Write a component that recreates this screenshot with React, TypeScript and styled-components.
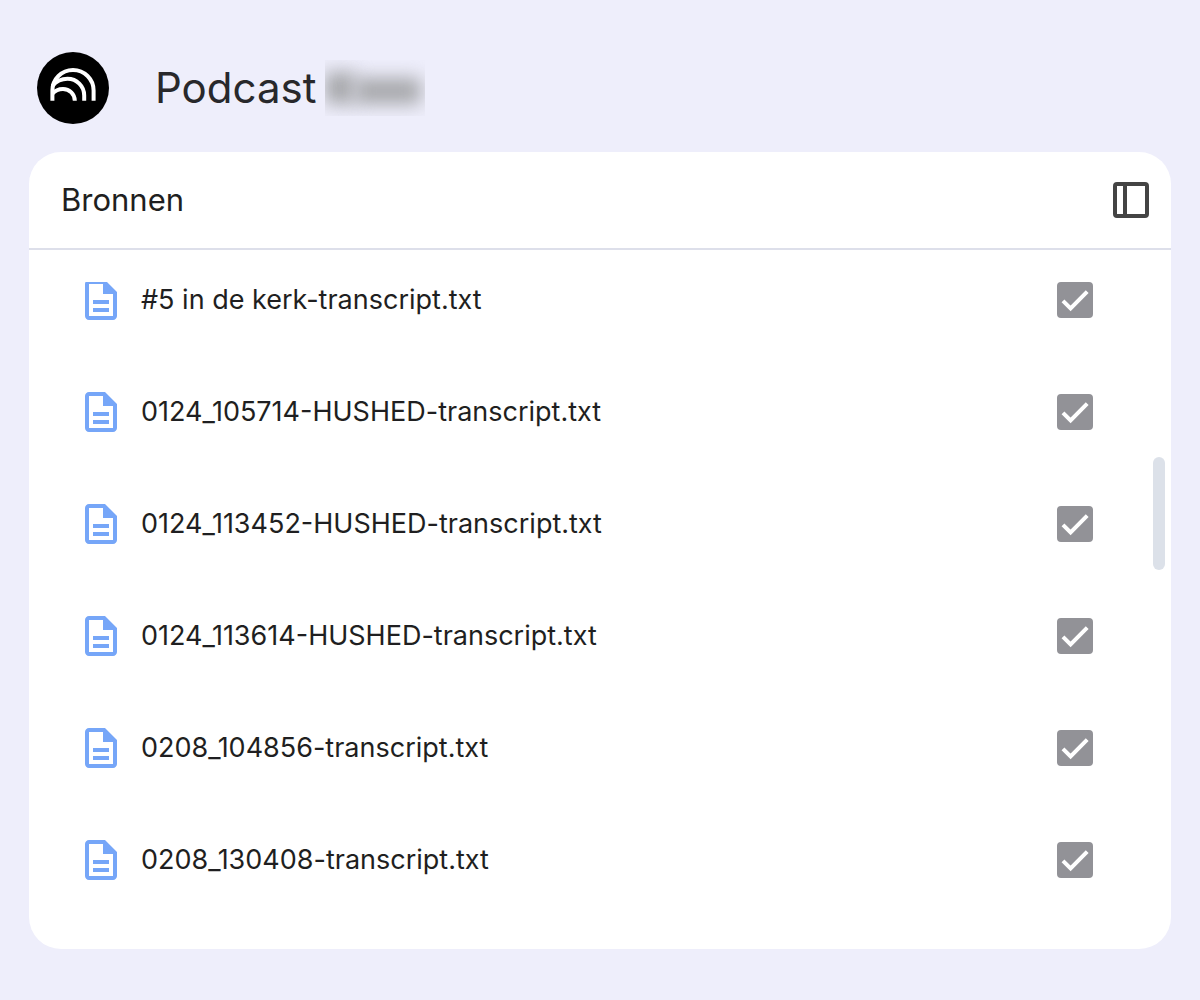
import React, { useState } from "react";
import styled, { createGlobalStyle } from "styled-components";

const GlobalStyle = createGlobalStyle`
  *,
  *::before,
  *::after {
    box-sizing: border-box;
  }

  body {
    margin: 0;
    background: #eeeefb;
    color: #1f1f21;
    font-family: Inter, "Liberation Sans", sans-serif;
  }
`;

const Page = styled.div`
  display: flex;
  flex-direction: column;
  gap: 28px;
  padding: 52px 29px 51px;
`;

const TopBar = styled.header`
  display: flex;
  align-items: center;
  gap: 46px;
  height: 72px;
  padding: 0 8px;
`;

const HomeLink = styled.a`
  display: block;
  flex: none;
  width: 72px;
  height: 72px;

  svg {
    display: block;
  }
`;

const TitleRow = styled.div`
  display: flex;
  align-items: center;
  gap: 9px;
`;

const Title = styled.h1`
  margin: 0;
  color: #28282b;
  font-size: 42px;
  font-weight: 400;
  line-height: 56px;
`;

const HiddenName = styled.span`
  display: flex;
  align-items: flex-end;
  width: 100px;
  height: 56px;
  padding-bottom: 12px;
  overflow: hidden;
`;

const NameSmudge = styled.span<{ $width: number; $height: number }>`
  flex: none;
  width: ${(p) => p.$width}px;
  height: ${(p) => p.$height}px;
  background: #a6a7aa;
  filter: blur(9px);
`;

const Panel = styled.section`
  background: #fff;
  border-radius: 32px;
  overflow: hidden;
`;

const PanelHeader = styled.div`
  display: flex;
  align-items: center;
  justify-content: space-between;
  height: 98px;
  padding: 0 22px 0 32px;
  border-bottom: 2px solid #dddfea;
`;

const PanelTitle = styled.h2`
  margin: 0;
  font-size: 31px;
  font-weight: 400;
  line-height: 40px;
`;

const IconButton = styled.button`
  display: block;
  width: 36px;
  height: 36px;
  padding: 0;
  border: 0;
  background: none;
  cursor: pointer;

  svg {
    display: block;
  }
`;

const PanelBody = styled.div`
  display: flex;
  justify-content: space-between;
  padding: 32px 6px 69px 56px;
`;

const SourceList = styled.ul`
  display: flex;
  flex: 1;
  flex-direction: column;
  justify-content: flex-end;
  gap: 72px;
  height: 598px;
  margin: 0;
  padding: 0;
  overflow: hidden;
  list-style: none;
`;

const SourceRow = styled.li`
  display: flex;
  flex: none;
  align-items: center;
  gap: 24px;
  height: 40px;

  > svg {
    flex: none;
  }
`;

const SourceName = styled.label`
  flex: 1;
  font-size: 27px;
  line-height: 40px;
`;

const CheckBox = styled.span`
  display: grid;
  width: 36px;
  height: 36px;

  > * {
    grid-area: 1 / 1;
  }

  svg {
    pointer-events: none;
  }

  input:not(:checked) + svg {
    visibility: hidden;
  }
`;

const CheckInput = styled.input`
  width: 36px;
  height: 36px;
  margin: 0;
  appearance: none;
  border: 4px solid #929297;
  border-radius: 4px;
  cursor: pointer;

  &:checked {
    background: #929297;
  }
`;

const ScrollTrack = styled.div`
  width: 12px;
  margin-left: 60px;
  padding-top: 175px;
`;

const ScrollThumb = styled.div`
  height: 113px;
  border-radius: 6px;
  background: #dce1e9;
`;

function LogoIcon() {
  return (
    <svg width="72" height="72" viewBox="0 0 72 72" aria-hidden="true">
      <circle cx="36" cy="36" r="36" fill="#000" />
      <g fill="none" stroke="#fff" strokeWidth="4">
        <path d="M15.4 48.8V38.6A20.6 20.6 0 0 1 56.6 38.6V48.8" />
        <path d="M15.4 33.9C19.4 29.2 24.8 26.8 30.5 26.8A16.7 16.7 0 0 1 47.2 43.5V48.8" />
        <path d="M15.4 41.8C18 38.7 22 37 26 37A11.8 11.8 0 0 1 37.8 48.8" />
      </g>
    </svg>
  );
}

function PanelIcon() {
  return (
    <svg width="36" height="36" viewBox="0 0 36 36" aria-hidden="true">
      <rect x="2" y="2" width="32" height="32" rx="2" fill="none" stroke="#444444" strokeWidth="4" />
      <path d="M12 2V34" stroke="#444444" strokeWidth="4" />
    </svg>
  );
}

function DocumentIcon() {
  return (
    <svg width="32" height="40" viewBox="4 2 16 20" fill="#76a6f8" aria-hidden="true">
      <path d="M8 16h8v2H8zm0-4h8v2H8zM14 2H6c-1.1 0-2 .9-2 2v16c0 1.1.9 2 2 2h12c1.1 0 2-.9 2-2V8l-6-6zm4 18H6V4h7v5h5v11z" />
    </svg>
  );
}

function CheckIcon() {
  return (
    <svg width="36" height="36" viewBox="0 0 36 36" aria-hidden="true">
      <path d="M6 18.8L13.6 26.4L30.2 9.6" fill="none" stroke="#fff" strokeWidth="4" />
    </svg>
  );
}

const sources = [
  "#5 in de kerk-transcript.txt",
  "0124_105714-HUSHED-transcript.txt",
  "0124_113452-HUSHED-transcript.txt",
  "0124_113614-HUSHED-transcript.txt",
  "0208_104856-transcript.txt",
  "0208_130408-transcript.txt",
];

function Source({ name, id }: { name: string; id: string }) {
  const [checked, setChecked] = useState(true);
  return (
    <SourceRow>
      <DocumentIcon />
      <SourceName htmlFor={id}>{name}</SourceName>
      <CheckBox>
        <CheckInput
          id={id}
          type="checkbox"
          checked={checked}
          onChange={(e) => setChecked(e.target.checked)}
        />
        <CheckIcon />
      </CheckBox>
    </SourceRow>
  );
}

export default function App() {
  return (
    <>
      <GlobalStyle />
      <Page>
        <TopBar>
          <HomeLink href="#" aria-label="Home">
            <LogoIcon />
          </HomeLink>
          <TitleRow>
            <Title>Podcast</Title>
            <HiddenName aria-hidden="true">
              <NameSmudge $width={30} $height={32} />
              <NameSmudge $width={66} $height={26} />
            </HiddenName>
          </TitleRow>
        </TopBar>
        <Panel>
          <PanelHeader>
            <PanelTitle>Bronnen</PanelTitle>
            <IconButton type="button" aria-label="Bronnen">
              <PanelIcon />
            </IconButton>
          </PanelHeader>
          <PanelBody>
            <SourceList>
              {sources.map((name, i) => (
                <Source key={name} name={name} id={`source-${i}`} />
              ))}
            </SourceList>
            <ScrollTrack>
              <ScrollThumb />
            </ScrollTrack>
          </PanelBody>
        </Panel>
      </Page>
    </>
  );
}
